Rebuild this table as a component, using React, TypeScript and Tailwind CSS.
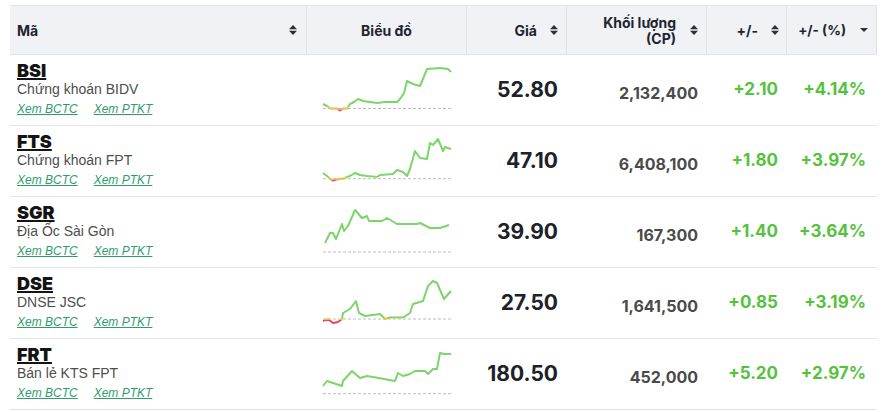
import React from 'react';

type Row = {
    code: string;
    name: string;
    price: string;
    vol: string;
    ch: string;
    pct: string;
    base: number;
    pts: [number, number][];
};

const rows: Row[] = [
    {
        code: 'BSI', name: 'Chứng khoán BIDV', price: '52.80', vol: '2,132,400', ch: '+2.10', pct: '+4.14%',
        base: 53.5,
        pts: [[16, 49], [20, 51], [24, 53.5], [30, 53.5], [33, 55.5], [36, 53.5], [40, 53.5], [43, 49], [47, 47], [51, 44], [56, 46], [63, 47], [70, 48], [78, 47], [90, 47], [93, 44], [97, 38], [100, 26], [106, 29], [113, 31], [118, 19], [120, 14], [133, 13], [141, 14], [144, 17]],
    },
    {
        code: 'FTS', name: 'Chứng khoán FPT', price: '47.10', vol: '6,408,100', ch: '+1.80', pct: '+3.97%',
        base: 52.7,
        pts: [[16, 47], [20, 50], [23, 52.7], [26, 54.5], [29, 53.5], [33, 52.7], [36, 52.7], [43, 50], [48, 47], [53, 49], [60, 50], [70, 51], [73, 49], [86, 48], [90, 44], [96, 46], [100, 50], [103, 43], [108, 25], [113, 32], [120, 33], [123, 17], [126, 19], [131, 13], [136, 25], [138, 21], [144, 23]],
    },
    {
        code: 'SGR', name: 'Địa Ốc Sài Gòn', price: '39.90', vol: '167,300', ch: '+1.40', pct: '+3.64%',
        base: 55,
        pts: [[18, 46], [23, 36], [26, 36], [29, 42], [31, 37], [35, 27], [37, 34], [41, 29], [48, 13], [55, 21], [60, 19], [62, 24], [75, 24], [80, 21], [90, 27], [110, 27], [113, 26], [123, 31], [133, 31], [142, 28]],
    },
    {
        code: 'DSE', name: 'DNSE JSC', price: '27.50', vol: '1,641,500', ch: '+0.85', pct: '+3.19%',
        base: 51,
        pts: [[16, 53], [21, 51], [26, 55], [31, 54], [35, 51], [36, 45], [43, 41], [49, 33], [52, 45], [58, 48], [73, 46], [78, 51], [83, 49.5], [96, 49.5], [103, 45], [106, 36], [116, 33], [121, 18], [126, 13], [130, 15], [137, 31], [144, 23]],
    },
    {
        code: 'FRT', name: 'Bán lẻ KTS FPT', price: '180.50', vol: '452,000', ch: '+5.20', pct: '+2.97%',
        base: 54.7,
        pts: [[16, 47], [20, 42], [26, 44], [35, 47], [36, 42], [45, 32], [53, 39], [60, 37], [66, 38], [88, 42], [91, 34], [96, 37], [103, 35], [108, 32], [118, 32], [121, 35], [126, 30], [130, 30], [133, 14], [137, 15], [144, 15]],
    },
];

const inter = { fontFamily: 'Inter, "Noto Sans", sans-serif' };
const arial = { fontFamily: '"Liberation Sans", Arial, sans-serif' };

function SortIcon() {
    return (
        <svg width="8" height="10" viewBox="0 0 8 10" className="shrink-0">
            <path d="M4 0 L8 4.2 H0 Z" fill="#2b2f36" />
            <path d="M0 5.8 H8 L4 10 Z" fill="#2b2f36" />
        </svg>
    );
}

function CaretDown() {
    return (
        <svg width="8" height="4" viewBox="0 0 8 4" className="shrink-0">
            <path d="M0 0 H8 L4 4 Z" fill="#2b2f36" />
        </svg>
    );
}

function Sparkline({ id, pts, base }: { id: string; pts: [number, number][]; base: number }) {
    const line = pts.map((p) => p.join(',')).join(' ');
    return (
        <svg width="160" height="70" viewBox="0 0 160 70">
            <defs>
                <clipPath id={`up-${id}`}>
                    <rect x="0" y="0" width="160" height={base - 1} />
                </clipPath>
                <clipPath id={`mid-${id}`}>
                    <rect x="0" y={base - 1} width="160" height="2" />
                </clipPath>
                <clipPath id={`down-${id}`}>
                    <rect x="0" y={base + 1} width="160" height="30" />
                </clipPath>
            </defs>
            <line x1="16" y1={base} x2="146" y2={base} stroke="#bcbcbc" strokeWidth="1" strokeDasharray="3 2" />
            <polyline points={line} fill="none" stroke="#7ad66a" strokeWidth="2" strokeLinejoin="round" clipPath={`url(#up-${id})`} />
            <polyline points={line} fill="none" stroke="#f2c230" strokeWidth="2" strokeLinejoin="round" clipPath={`url(#mid-${id})`} />
            <polyline points={line} fill="none" stroke="#e8455e" strokeWidth="2" strokeLinejoin="round" clipPath={`url(#down-${id})`} />
        </svg>
    );
}

export default function App() {
    return (
        <div className="bg-white w-[883px] h-[412px] pt-[5px] pl-[10px] overflow-hidden">
            <div className="w-[867px]">
                {/* Header */}
                <div
                    className="grid grid-cols-[297px_160px_100px_140px_80px_90px] h-[50px] bg-[#f0f2f5] border-t border-b border-[#e2e4e8] text-[14px] font-bold text-[#1f2430]"
                    style={inter}
                >
                    <div className="flex items-center justify-between pl-[7px] pr-[9px] border-r border-[#dfe2e6]">
                        <span>Mã</span>
                        <SortIcon />
                    </div>
                    <div className="flex items-center justify-center border-r border-[#dfe2e6]">Biểu đồ</div>
                    <div className="flex items-center justify-end gap-[13px] pr-[8px] border-r border-[#dfe2e6]">
                        <span>Giá</span>
                        <SortIcon />
                    </div>
                    <div className="flex items-center justify-end gap-[14px] pr-[8px] border-r border-[#dfe2e6]">
                        <span className="text-right leading-[16px] pt-[2px]">
                            Khối lượng
                            <br />
                            (CP)
                        </span>
                        <SortIcon />
                    </div>
                    <div className="flex items-center justify-end gap-[13px] pr-[7px] border-r border-[#dfe2e6]">
                        <span>+/-</span>
                        <SortIcon />
                    </div>
                    <div className="flex items-center justify-end gap-[14px] pr-[8px] border-r border-[#dfe2e6]">
                        <span className="text-[13.5px]">+/- (%)</span>
                        <CaretDown />
                    </div>
                </div>

                {/* Rows */}
                {rows.map((r) => (
                    <div
                        key={r.code}
                        className="grid grid-cols-[297px_160px_100px_140px_80px_90px] h-[71px] border-b border-[#e4e4e4]"
                    >
                        <div className="pl-[7px] pt-[6px]">
                            <div
                                className="text-[18px] leading-[20px] font-black text-[#141414] underline decoration-2 underline-offset-[1px]"
                                style={inter}
                            >
                                {r.code}
                            </div>
                            <div className="text-[14px] leading-4 text-[#4d4d4d]" style={arial}>
                                {r.name}
                            </div>
                            <div className="flex gap-[16px] mt-1 text-[12px] leading-4 italic text-[#2f9d6b] underline" style={arial}>
                                <span>Xem BCTC</span>
                                <span>Xem PTKT</span>
                            </div>
                        </div>
                        <div className="flex items-center">
                            <Sparkline id={r.code} pts={r.pts} base={r.base} />
                        </div>
                        <div className="flex items-center justify-end pr-[9px] text-[21px] font-bold text-[#1d2129]" style={inter}>
                            {r.price}
                        </div>
                        <div className="flex items-center justify-end pr-[9px] pt-[5px] text-[16px] font-bold text-[#4a4a4a]" style={inter}>
                            {r.vol}
                        </div>
                        <div className="flex items-center justify-end pr-[9px] text-[17px] font-bold text-[#55c23c]" style={inter}>
                            {r.ch}
                        </div>
                        <div className="flex items-center justify-end pr-[11px] text-[17px] font-bold text-[#55c23c]" style={inter}>
                            {r.pct}
                        </div>
                    </div>
                ))}
            </div>
        </div>
    );
}
